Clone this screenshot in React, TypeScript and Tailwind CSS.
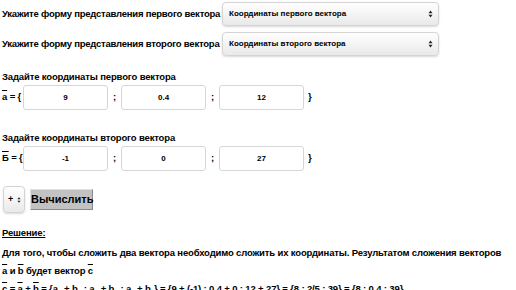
import { useState } from 'react';

const Arrows = () => (
  <svg width="5" height="8" viewBox="0 0 5 8" className="pointer-events-none absolute right-[6px] top-1/2 -translate-y-1/2">
    <path d="M0.5 3.2 L2.5 0.6 L4.5 3.2 Z" fill="#222" />
    <path d="M0.5 4.8 L2.5 7.4 L4.5 4.8 Z" fill="#222" />
  </svg>
);

type PickProps = {
  value: string;
  options: string[];
  className: string;
  onChange: (v: string) => void;
};

const Pick = ({ value, options, className, onChange }: PickProps) => {
  return (
    <div className={'relative ' + className}>
      <select
        value={value}
        onChange={(e) => onChange(e.target.value)}
        className="h-full w-full appearance-none rounded-[4px] border border-[#d4d4d4] bg-gradient-to-b from-white to-[#e9e9e9] pl-[6px] text-[8px] font-bold tracking-normal text-black shadow-[0_1px_2px_rgba(0,0,0,0.15)] outline-none"
      >
        {options.map((o) => (
          <option key={o} value={o}>
            {o}
          </option>
        ))}
      </select>
      <Arrows />
    </div>
  );
};

const Field = ({ value }: { value: string }) => (
  <input
    defaultValue={value}
    className="h-[25px] w-[85px] rounded-[3px] border border-[#d6d6d6] bg-white text-center text-[8px] font-bold tracking-normal text-black outline-none"
  />
);

const Bar = ({ children }: { children: React.ReactNode }) => (
  <span className="overline">{children}</span>
);

const Sub = ({ children }: { children: React.ReactNode }) => (
  <sub className="text-[7px] leading-none">{children}</sub>
);

function App() {
  const [form1, setForm1] = useState('Координаты первого вектора');
  const [form2, setForm2] = useState('Координаты второго вектора');
  const [op, setOp] = useState('+');

  const forms1 = ['Координаты первого вектора', 'Координаты точек начала и конца'];
  const forms2 = ['Координаты второго вектора', 'Координаты точек начала и конца'];

  return (
    <div className="h-[290px] w-[516px] overflow-hidden bg-white pl-[2px] pt-[2px] font-['Liberation_Sans',Arial,sans-serif] text-[9.5px] font-bold tracking-[-0.15px] text-black">
      <div className="flex h-[24px] items-center">
        <span className="w-[220px] whitespace-nowrap tracking-[-0.22px]">Укажите форму представления первого вектора</span>
        <Pick value={form1} options={forms1} onChange={setForm1} className="h-[24px] w-[217px]" />
      </div>
      <div className="mt-[6px] flex h-[24px] items-center">
        <span className="w-[220px] whitespace-nowrap tracking-[-0.22px]">Укажите форму представления второго вектора</span>
        <Pick value={form2} options={forms2} onChange={setForm2} className="h-[24px] w-[217px]" />
      </div>

      <div className="mt-[14px] leading-[14px]">Задайте координаты первого вектора</div>
      <div className="mt-[1px] flex items-center gap-[3px] whitespace-nowrap">
        <span className="w-[18px]">
          <Bar>a</Bar> = {'{'}
        </span>
        <Field value="9" />
        <span className="px-[2px]">;</span>
        <Field value="0.4" />
        <span className="px-[2px]">;</span>
        <Field value="12" />
        <span className="pl-[1px]">{'}'}</span>
      </div>

      <div className="mt-[21px] leading-[14px]">Задайте координаты второго вектора</div>
      <div className="mt-[1px] flex items-center gap-[3px] whitespace-nowrap">
        <span className="w-[18px]">
          <Bar>Б</Bar> = {'{'}
        </span>
        <Field value="-1" />
        <span className="px-[2px]">;</span>
        <Field value="0" />
        <span className="px-[2px]">;</span>
        <Field value="27" />
        <span className="pl-[1px]">{'}'}</span>
      </div>

      <div className="mt-[15px] flex h-[27px] items-center gap-[5px] pl-[1px]">
        <div className="relative h-[27px] w-[22px]">
          <select
            value={op}
            onChange={(e) => setOp(e.target.value)}
            className="h-full w-full appearance-none rounded-[4px] border border-[#d4d4d4] bg-gradient-to-b from-white to-[#e9e9e9] pl-[4px] text-[9px] font-bold text-black shadow-[0_1px_2px_rgba(0,0,0,0.15)] outline-none"
          >
            <option value="+">+</option>
            <option value="-">-</option>
          </select>
          <svg width="4" height="7" viewBox="0 0 5 8" className="pointer-events-none absolute right-[4px] top-1/2 -translate-y-1/2">
            <path d="M0.5 3.2 L2.5 0.6 L4.5 3.2 Z" fill="#222" />
            <path d="M0.5 4.8 L2.5 7.4 L4.5 4.8 Z" fill="#222" />
          </svg>
        </div>
        <button className="h-[21px] w-[63px] border border-t-[#e0e0e0] border-l-[#e0e0e0] border-r-[#888] border-b-[#888] bg-[#c2c2c2] text-[11px] font-bold tracking-normal text-black">
          Вычислить
        </button>
      </div>

      <div className="mt-[11px] leading-[18px] underline">Решение:</div>
      <div className="mt-[2px] leading-[18px]">
        <div className="whitespace-nowrap">
          Для того, чтобы сложить два вектора необходимо сложить их координаты. Результатом сложения векторов
        </div>
        <div>
          <Bar>a</Bar> и <Bar>b</Bar> будет вектор <Bar>c</Bar>
        </div>
        <div className="whitespace-nowrap">
          <Bar>c</Bar> = <Bar>a</Bar> + <Bar>b</Bar> = {'{'}a<Sub>x</Sub> + b<Sub>x</Sub> ; a<Sub>y</Sub> + b<Sub>y</Sub> ; a
          <Sub>z</Sub> + b<Sub>z</Sub>
          {'}'} = {'{'}9 + (-1) ; 0.4 + 0 ; 12 + 27{'}'} = {'{'}8 ; 2/5 ; 39{'}'} = {'{'}8 ; 0.4 ; 39{'}'}
        </div>
      </div>
    </div>
  );
}

export default App;
